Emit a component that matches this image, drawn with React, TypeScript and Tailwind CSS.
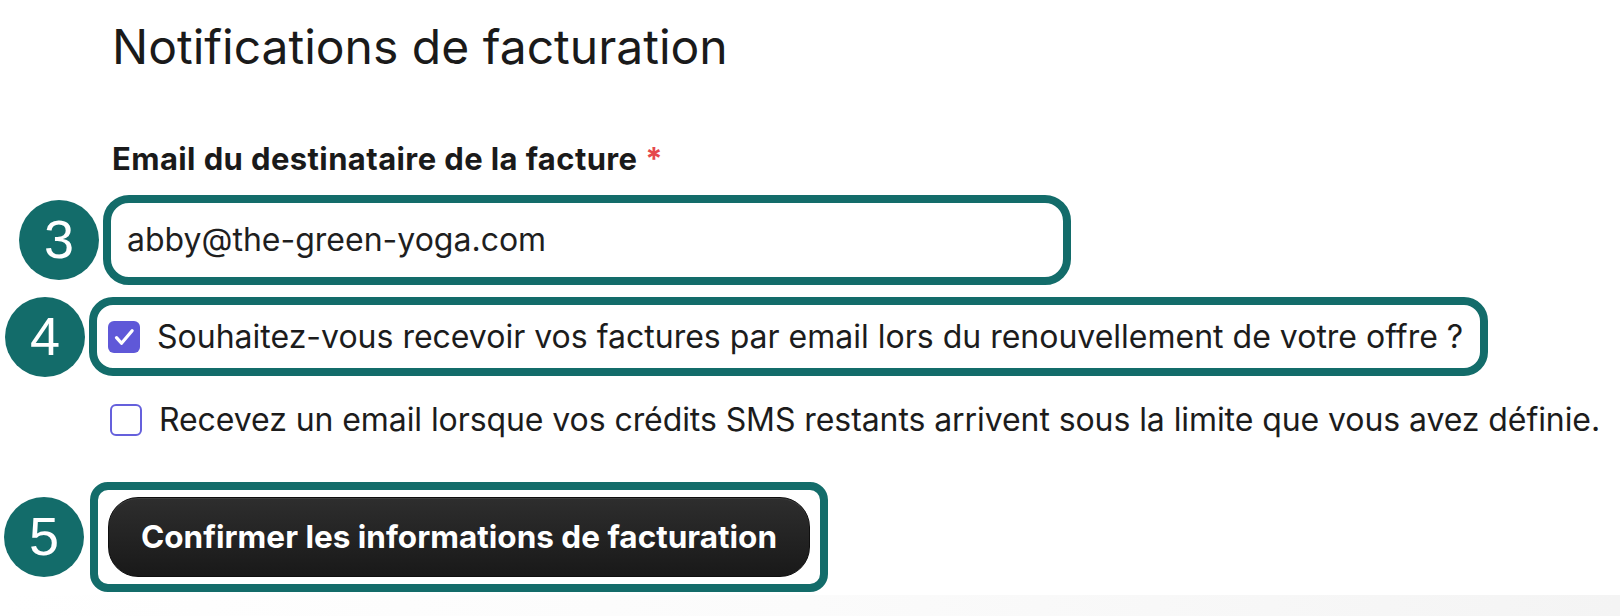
import React from "react";

function Badge({ n }: { n: string }) {
  return (
    <div
      className="w-[80px] h-[80px] rounded-full bg-[#136c6a] flex items-center justify-center shrink-0 text-white text-[54px] leading-none"
      style={{ fontFamily: '"Liberation Sans", Arial, sans-serif' }}
    >
      <span className="-mt-[2px]">{n}</span>
    </div>
  );
}

export default function App() {
  return (
    <div
      className="w-[1620px] h-[616px] bg-white overflow-hidden flex flex-col text-[#1c1c1c]"
      style={{ fontFamily: 'Inter, "Noto Sans", sans-serif' }}
    >
      <div className="pt-[23px] flex flex-col flex-1">
        <h1 className="ml-[112px] text-[48px] leading-[48px] font-normal text-[#1a1a1a]">
          Notifications de facturation
        </h1>

        <div className="ml-[112px] mt-[70px] text-[31px] leading-[36px] font-bold tracking-[0.4px] text-[#1a1a1a]">
          Email du destinataire de la facture{" "}
          <span className="text-[#e5484d]">*</span>
        </div>

        {/* Row 3 */}
        <div className="mt-[18px] ml-[19px] flex items-center gap-[4px] h-[90px]">
          <Badge n="3" />
          <div className="w-[968px] h-[90px] rounded-[26px] border-[8px] border-[#136c6a] bg-white flex items-center pl-[16px]">
            <span className="text-[32px] leading-none text-[#1f1f1f]">
              abby@the-green-yoga.com
            </span>
          </div>
        </div>

        {/* Row 4 */}
        <div className="mt-[12px] ml-[5px] flex items-center gap-[4px] h-[79px]">
          <Badge n="4" />
          <div className="w-[1399px] h-[79px] rounded-[24px] border-[8px] border-[#136c6a] bg-white flex items-center pl-[11px] gap-[17px] whitespace-nowrap">
            <div className="w-[32px] h-[32px] rounded-[6px] bg-[#5f58d8] flex items-center justify-center shrink-0">
              <svg width="30" height="30" viewBox="0 0 24 24" fill="none">
                <path
                  d="M6 12.5l4 4.5L18.5 7"
                  stroke="white"
                  strokeWidth="2.6"
                  strokeLinecap="round"
                  strokeLinejoin="round"
                />
              </svg>
            </div>
            <span className="text-[32px] leading-none">
              Souhaitez-vous recevoir vos factures par email lors du renouvellement de votre offre ?
            </span>
          </div>
        </div>

        {/* Unchecked row */}
        <div className="mt-[28px] ml-[110px] flex items-center gap-[17px] h-[32px] whitespace-nowrap">
          <div className="w-[32px] h-[32px] rounded-[6px] border-[2px] border-[#6560dc] bg-white shrink-0" />
          <span className="text-[32px] leading-none tracking-[-0.08px]">
            Recevez un email lorsque vos crédits SMS restants arrivent sous la limite que vous avez définie.
          </span>
        </div>

        {/* Row 5 */}
        <div className="mt-[46px] ml-[4px] flex items-center gap-[6px] h-[110px]">
          <Badge n="5" />
          <div className="w-[738px] h-[110px] rounded-[18px] border-[8px] border-[#136c6a] bg-white flex items-center justify-center">
            <button className="w-[702px] h-[80px] rounded-[30px] bg-gradient-to-b from-[#2e2e2e] to-[#191919] border border-[#0f0f0f] text-white text-[31.5px] font-bold shadow-[inset_0_1px_0_rgba(255,255,255,0.08)]">
              Confirmer les informations de facturation
            </button>
          </div>
        </div>

        <div className="flex-1 mt-[3px] bg-gradient-to-r from-white via-[#fbfbfb] to-[#f4f4f4]" />
      </div>
    </div>
  );
}
